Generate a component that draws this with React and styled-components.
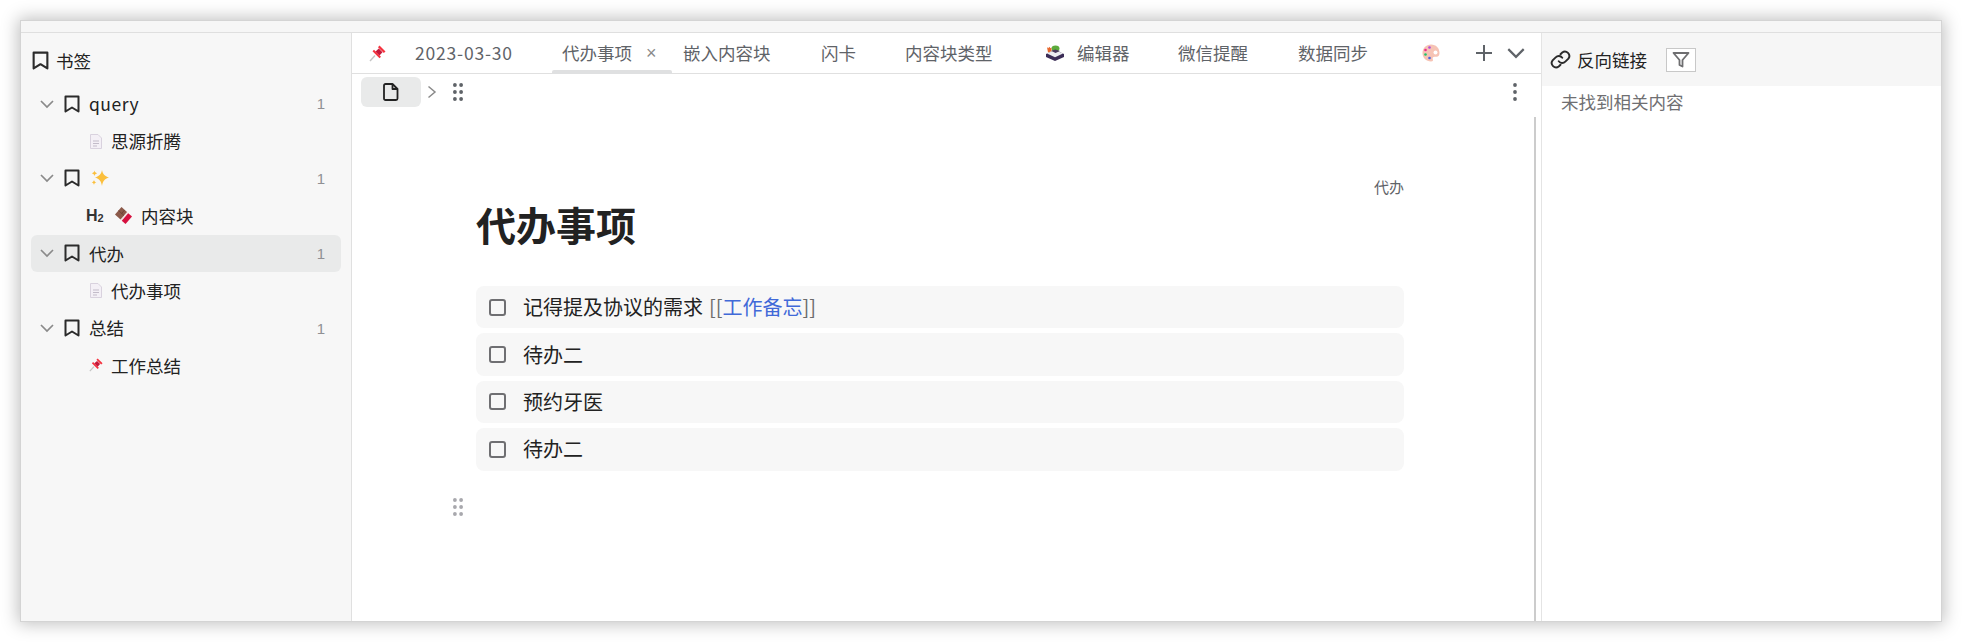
import React from "react";
import styled, { createGlobalStyle } from "styled-components";

const cjk = `"Noto Sans CJK SC", "Noto Sans", sans-serif`;

const Global = createGlobalStyle`
  html, body { margin: 0; padding: 0; background: #fff; overflow: hidden; }
  body { font-family: ${cjk}; color: #222; }
`;

const Page = styled.div`
  width: 1962px;
  height: 642px;
  padding: 21px;
  box-sizing: border-box;
`;
const Window = styled.div`
  width: 1920px;
  height: 600px;
  display: flex;
  flex-direction: column;
  background: #fff;
  box-shadow: 0 0 0 1px #d4d4d4, 0 0 16px 3px rgba(0, 0, 0, 0.25);
`;
const TitleBar = styled.div`
  height: 11px;
  flex: none;
  background: #f6f6f6;
  border-bottom: 1px solid #dfdfdf;
`;
const Body = styled.div`
  flex: 1;
  display: flex;
  min-height: 0;
`;
const Sidebar = styled.aside`
  width: 331px;
  flex: none;
  box-sizing: border-box;
  background: #f7f7f7;
  border-right: 1px solid #e0e0e0;
  padding: 0 10px;
`;
const SideHeader = styled.div`
  height: 52px;
  box-sizing: border-box;
  padding-top: 3px;
  display: flex;
  align-items: center;
  gap: 6px;
  font-size: 17.5px;
  color: #222;
`;
const Row = styled.div`
  height: 37.4px;
  display: flex;
  align-items: center;
  border-radius: 6px;
  font-size: 17.5px;
  white-space: nowrap;
  background: ${(p) => (p.$active ? "#e9eaea" : "transparent")};
  padding-left: ${(p) => p.$indent || 0}px;
`;
const Chevron = styled.span`
  width: 32px;
  display: flex;
  justify-content: center;
  flex: none;
  color: #8a8a8a;
`;
const RowName = styled.span`
  margin-left: ${(p) => p.$gap ?? 8}px;
  flex: 1;
  line-height: 1;
  letter-spacing: ${(p) => (p.$latin ? "0.5px" : "0")};
`;
const Count = styled.span`
  font-size: 15px;
  color: #909094;
  margin-right: 16px;
  font-family: "Liberation Sans", sans-serif;
`;
const Main = styled.main`
  flex: 1;
  min-width: 0;
  display: flex;
  flex-direction: column;
  position: relative;
`;
const TabBar = styled.div`
  height: 41px;
  flex: none;
  box-sizing: border-box;
  display: flex;
  align-items: center;
  border-bottom: 1px solid #e0e0e0;
  position: relative;
  font-size: 17.5px;
  color: #5f6368;
`;
const Tab = styled.div`
  flex: none;
  width: ${(p) => p.$w}px;
  height: 100%;
  box-sizing: border-box;
  display: flex;
  align-items: center;
  padding-left: ${(p) => p.$pad}px;
  gap: ${(p) => p.$gap || 0}px;
  white-space: nowrap;
  position: relative;
  line-height: 1;
  &::after {
    content: "";
    display: ${(p) => (p.$active ? "block" : "none")};
    position: absolute;
    left: 0;
    right: 0;
    bottom: -1px;
    height: 4px;
    border-radius: 2px 2px 0 0;
    background: #dfe0e1;
  }
`;
const DateLabel = styled.span`
  letter-spacing: 0.8px;
`;
const TabTools = styled.div`
  display: flex;
  align-items: center;
  gap: 15px;
  padding-left: 12px;
  color: #5f6368;
`;
const CloseMark = styled.span`
  font-size: 18px;
  color: #8a8a8a;
  font-family: "Liberation Sans", sans-serif;
`;
const Crumbs = styled.div`
  height: 35px;
  flex: none;
  box-sizing: border-box;
  padding: 1px 24px 0 9px;
  display: flex;
  align-items: center;
`;
const DocButton = styled.div`
  width: 60px;
  height: 30px;
  border-radius: 6px;
  background: #e9eaea;
  display: flex;
  align-items: center;
  justify-content: center;
  color: #222;
`;
const CrumbSep = styled.span`
  width: 22px;
  display: flex;
  justify-content: center;
  color: #8a8a8a;
`;
const GripSlot = styled.span`
  margin-left: 10px;
  display: flex;
  color: #5f6368;
`;
const CrumbSpacer = styled.div`
  flex: 1;
`;
const Editor = styled.div`
  flex: 1;
  display: flex;
  flex-direction: column;
  padding: 0 0 0 124px;
  position: relative;
`;
const Content = styled.div`
  width: 928px;
  display: flex;
  flex-direction: column;
`;
const TagLine = styled.div`
  margin-top: 67px;
  height: 22px;
  line-height: 22px;
  text-align: right;
  font-size: 15px;
  color: #5f6368;
`;
const Title = styled.h1`
  margin: 0;
  height: 52px;
  line-height: 52px;
  font-size: 40px;
  font-weight: 700;
  color: #222;
`;
const TaskList = styled.div`
  margin-top: 36px;
  display: flex;
  flex-direction: column;
  gap: 5px;
`;
const Task = styled.div`
  height: 42.4px;
  border-radius: 8px;
  background: #f7f7f7;
  display: flex;
  align-items: center;
  padding-left: 13px;
  font-size: 20px;
  color: #222;
  line-height: 1;
`;
const Box = styled.span`
  width: 13px;
  height: 13px;
  flex: none;
  border: 2px solid #6f6f72;
  border-radius: 3px;
  margin-right: 18px;
  margin-right: 17px;
`;
const Bracket = styled.span`
  color: #6b6b6b;
  margin-left: 6px;
`;
const RefLink = styled.span`
  color: #4169d8;
`;
const DragHandle = styled.div`
  margin: 27px 0 0 -23px;
  height: 18px;
  color: #a8a8ad;
  display: flex;
`;
const ScrollBar = styled.div`
  position: absolute;
  right: 5px;
  top: 8px;
  bottom: 0;
  width: 2px;
  background: #cccccc;
`;
const Backlinks = styled.aside`
  width: 400px;
  flex: none;
  box-sizing: border-box;
  border-left: 1px solid #e4e4e4;
  display: flex;
  flex-direction: column;
`;
const BackHeader = styled.div`
  height: 53px;
  flex: none;
  background: #f6f6f6;
  display: flex;
  align-items: center;
  padding-left: 8px;
  font-size: 17.5px;
  color: #222;
`;
const BackTitle = styled.span`
  margin-left: 6px;
  line-height: 1;
`;
const FilterBox = styled.div`
  margin-left: 19px;
  width: 30px;
  height: 24px;
  box-sizing: border-box;
  background: #fff;
  border: 1px solid #c8c8c8;
  display: flex;
  align-items: center;
  justify-content: center;
  color: #6e6e70;
`;
const EmptyNote = styled.div`
  padding: 2px 0 0 19px;
  font-size: 17.5px;
  line-height: 28px;
  color: #6f6f72;
`;

const Bookmark = ({ size = 18 }) => (
  <svg width={size} height={size} viewBox="0 0 18 18" fill="none" stroke="#2b2b2b" strokeWidth="2" strokeLinejoin="round">
    <path d="M2.500 1.500h13v15l-6.500-4-6.500 4z" />
  </svg>
);
const Down = ({ size = 14 }) => (
  <svg width={size} height={size} viewBox="0 0 14 14" fill="none" stroke="currentColor" strokeWidth="1.700">
    <path d="M1 4l6 6 6-6" />
  </svg>
);
const Right = () => (
  <svg width="10" height="14" viewBox="0 0 10 14" fill="none" stroke="currentColor" strokeWidth="1.500">
    <path d="M1.500 1.500L8 7l-6.500 5.500" />
  </svg>
);
const Grip = () => (
  <svg width="10" height="18" viewBox="0 0 10 18" fill="currentColor">
    {[2, 9, 16].map((y) => (
      <g key={y}>
        <circle cx="1.900" cy={y} r="1.900" />
        <circle cx="8.100" cy={y} r="1.900" />
      </g>
    ))}
  </svg>
);
const Kebab = () => (
  <svg width="4" height="18" viewBox="0 0 4 18" fill="#5f6368">
    <circle cx="2" cy="2" r="1.900" />
    <circle cx="2" cy="9" r="1.900" />
    <circle cx="2" cy="16" r="1.900" />
  </svg>
);
const DocGlyph = () => (
  <svg width="16" height="18" viewBox="0 0 16 18" fill="none" stroke="currentColor" strokeWidth="1.800" strokeLinejoin="round">
    <path d="M2.500 1h7l5 5v9.500a1.500 1.500 0 0 1-1.500 1.500H2.500A1.500 1.500 0 0 1 1 15.500v-13A1.500 1.500 0 0 1 2.500 1z" />
    <path d="M9.500 1v5h5" />
  </svg>
);
const PageEmoji = () => (
  <svg width="12" height="15" viewBox="0 0 12 15">
    <path d="M.5.5h7.500l3.500 3.500v10.500H.5z" fill="#f4f0f6" stroke="#d9d2de" />
    <path d="M3 7h6M3 9.500h6M3 12h4" stroke="#c3bcc9" strokeWidth="1" />
  </svg>
);
const PinEmoji = ({ size = 17 }) => (
  <svg width={size} height={size} viewBox="0 0 17 17">
    <path d="M1 16l5-5.500" stroke="#c4c4c4" strokeWidth="1.400" />
    <path d="M10.500.5L16.500 6.500 14.800 8 9 2.200z" fill="#f5333f" />
    <path d="M5 4.800L12 11.800 10.500 13.300 3.500 6.300z" fill="#f5333f" />
    <path d="M9.800 3.500L13.500 7.200 10.500 10.500 6.500 6.500z" fill="#c4183a" />
  </svg>
);
const Sparkles = () => (
  <svg width="20" height="18" viewBox="0 0 20 18" fill="#fbbf3c">
    <path d="M12 1c.8 4 2.500 6 7 7.500-4.500 1.500-6.200 3.500-7 8.500-.8-5-2.500-7-7-8.500C9.500 7 11.200 5 12 1z" />
    <path d="M4.500 1.500c.3 1.500 1 2.300 2.700 2.800-1.700.5-2.400 1.300-2.700 2.900-.3-1.600-1-2.400-2.700-2.900 1.700-.5 2.400-1.300 2.700-2.800z" />
    <path d="M4 11c.3 1.300.8 1.900 2.300 2.400-1.500.4-2 1-2.300 2.600-.3-1.600-.8-2.200-2.300-2.600 1.500-.5 2-1.100 2.300-2.400z" />
  </svg>
);
const Chocolate = () => (
  <svg width="19" height="19" viewBox="0 0 19 19">
    <path d="M7.500 1L18 10.500 11.500 18 1 8.500z" fill="#f3e4e4" />
    <path d="M7.500 1L13 6 6.500 13.500 1 8.500z" fill="#8b5a4a" />
    <path d="M4.500 4.500L10 9.500M7.500 7.800L10.500 4" stroke="#6d4337" strokeWidth=".9" />
    <path d="M14.200 7.200L18 10.500 11.500 18 7.800 14.700z" fill="#d6103f" />
  </svg>
);
const ComputerEmoji = () => (
  <svg width="18" height="16" viewBox="0 0 18 16">
    <path d="M0 9l9-4 9 4v3l-9 4-9-4z" fill="#3b2d57" />
    <path d="M1 8.500l8-3.500 8 3.500-8 3.800z" fill="#ececf1" />
    <ellipse cx="9.500" cy="3.500" rx="4" ry="3" fill="#5cab3c" />
    <path d="M5 5.800L9.500 4.500 14 6 9.500 8z" fill="#4a3a60" />
    <path d="M1 2l1.200 1.300L3.400 1.800l1 1.500 1-.8v3.700L2 7.500z" fill="#e8662a" />
  </svg>
);
const Palette = () => (
  <svg width="18" height="18" viewBox="0 0 18 18">
    <path d="M9 .5C4 .5.500 4.200.500 9S4 17.500 9 17.500c1.800 0 2.300-1 1.800-2.300-.6-1.500.2-2.500 1.800-2.500h2c1.900 0 2.900-1.500 2.900-3.700C17.500 4 14 .5 9 .5z" fill="#f6c3b4" />
    <circle cx="13.500" cy="8.500" r="2" fill="#fff" />
    <circle cx="7.500" cy="3.500" r="1.300" fill="#b34ad8" />
    <circle cx="3.500" cy="6" r="1.300" fill="#ee2a8c" />
    <circle cx="3.500" cy="10.500" r="1.300" fill="#1fc46a" />
    <circle cx="7.500" cy="14" r="1.300" fill="#4a62e0" />
  </svg>
);
const Plus = () => (
  <svg width="16" height="16" viewBox="0 0 16 16" stroke="currentColor" strokeWidth="2">
    <path d="M8 0v16M0 8h16" />
  </svg>
);
const LinkGlyph = () => (
  <svg width="21" height="21" viewBox="0 0 24 24" fill="none" stroke="#2b2b2b" strokeWidth="2.200" strokeLinecap="round">
    <path d="M10 14a5 5 0 0 0 7.500.5l3.500-3.500a5 5 0 0 0-7-7l-2 2" />
    <path d="M14 10a5 5 0 0 0-7.500-.5L3 13a5 5 0 0 0 7 7l2-2" />
  </svg>
);
const Funnel = () => (
  <svg width="18" height="18" viewBox="0 0 18 18" fill="none" stroke="currentColor" strokeWidth="1.800" strokeLinejoin="round">
    <path d="M1.500 2h15l-6 7v6.500l-3-1.500V9z" />
  </svg>
);
const H2Mark = styled.span`
  width: 18px;
  flex: none;
  font-size: 16px;
  font-weight: 700;
  color: #333;
  font-family: "Liberation Sans", sans-serif;
  line-height: 1;
  white-space: nowrap;
  sub {
    font-size: 11px;
    vertical-align: -1px;
    line-height: 1;
  }
`;
const H2Gap = styled.span`
  margin-left: 10px;
  display: flex;
`;
const IconSlot = styled.span`
  width: 14px;
  display: flex;
  justify-content: center;
`;

const GroupRow = ({ icon, name, active, latin }) => (
  <Row $active={active}>
    <Chevron><Down /></Chevron>
    <Bookmark size={18} />
    {icon ? <RowName $gap={9}>{icon}</RowName> : <RowName $latin={latin}>{name}</RowName>}
    <Count>1</Count>
  </Row>
);
const ChildRow = ({ icon, name }) => (
  <Row $indent={58}>
    <IconSlot>{icon}</IconSlot>
    <RowName>{name}</RowName>
  </Row>
);
const tasks = ["待办二", "预约牙医", "待办二"];

export default function App() {
  return (
    <Page>
      <Global />
      <Window>
        <TitleBar />
        <Body>
          <Sidebar>
            <SideHeader><Bookmark size={19} />书签</SideHeader>
            <GroupRow name="query" latin />
            <ChildRow icon={<PageEmoji />} name="思源折腾" />
            <GroupRow icon={<Sparkles />} />
            <Row $indent={55}>
              <H2Mark>H<sub>2</sub></H2Mark>
              <H2Gap><Chocolate /></H2Gap>
              <RowName $gap={8}>内容块</RowName>
            </Row>
            <GroupRow name="代办" active />
            <ChildRow icon={<PageEmoji />} name="代办事项" />
            <GroupRow name="总结" />
            <ChildRow icon={<PinEmoji size={16} />} name="工作总结" />
          </Sidebar>
          <Main>
            <TabBar>
              <Tab $w={63} $pad={17}><PinEmoji /></Tab>
              <Tab $w={137} $pad={0}><DateLabel>2023-03-30</DateLabel></Tab>
              <Tab $w={120} $pad={10} $gap={14} $active>代办事项<CloseMark>×</CloseMark></Tab>
              <Tab $w={138} $pad={11}>嵌入内容块</Tab>
              <Tab $w={84} $pad={11}>闪卡</Tab>
              <Tab $w={138} $pad={11}>内容块类型</Tab>
              <Tab $w={134} $pad={14} $gap={13}><ComputerEmoji />编辑器</Tab>
              <Tab $w={120} $pad={12}>微信提醒</Tab>
              <Tab $w={124} $pad={12}>数据同步</Tab>
              <Tab $w={54} $pad={12}><Palette /></Tab>
              <TabTools><Plus /><Down size={18} /></TabTools>
            </TabBar>
            <Crumbs>
              <DocButton><DocGlyph /></DocButton>
              <CrumbSep><Right /></CrumbSep>
              <GripSlot><Grip /></GripSlot>
              <CrumbSpacer />
              <Kebab />
            </Crumbs>
            <Editor>
              <Content>
                <TagLine>代办</TagLine>
                <Title>代办事项</Title>
                <TaskList>
                  <Task>
                    <Box />记得提及协议的需求
                    <Bracket>[[<RefLink>工作备忘</RefLink>]]</Bracket>
                  </Task>
                  {tasks.map((t, i) => (
                    <Task key={i}><Box />{t}</Task>
                  ))}
                </TaskList>
                <DragHandle><Grip /></DragHandle>
              </Content>
              <ScrollBar />
            </Editor>
          </Main>
          <Backlinks>
            <BackHeader>
              <LinkGlyph />
              <BackTitle>反向链接</BackTitle>
              <FilterBox><Funnel /></FilterBox>
            </BackHeader>
            <EmptyNote>未找到相关内容</EmptyNote>
          </Backlinks>
        </Body>
      </Window>
    </Page>
  );
}
